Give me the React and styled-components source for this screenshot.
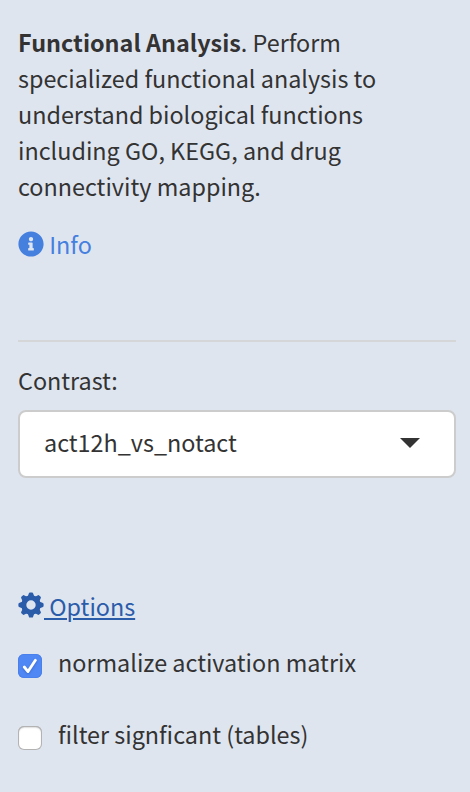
import React, { useState } from "react";
import styled, { createGlobalStyle } from "styled-components";
import { FaInfoCircle } from "react-icons/fa";

const GlobalStyle = createGlobalStyle`
  * { box-sizing: border-box; }
  body {
    margin: 0;
    background: #dfe5ef;
    color: #333;
    font-family: "Noto Sans CJK SC", "Noto Sans", sans-serif;
    font-size: 23.37px;
    line-height: 36px;
  }
`;

const Sidebar = styled.aside`
  display: flex;
  flex-direction: column;
  width: 470px;
  height: 792px;
  padding: 24px 14px 0 18px;
  overflow: hidden;
  background: #dfe5ef;
`;

const Description = styled.p`
  margin: 0;
  white-space: nowrap;
`;

const IconLink = styled.a`
  display: flex;
  align-items: center;
  align-self: flex-start;
  height: 36px;
  margin-top: ${(p) => p.$top}px;
  color: ${(p) => p.$color};
  text-decoration: none;
  svg {
    display: block;
    flex: none;
    width: 26px;
    height: 26px;
    margin-bottom: ${(p) => p.$lift || 0}px;
  }
`;

const LinkText = styled.span`
  white-space: pre;
  text-decoration: ${(p) => (p.$underlined ? "underline" : "none")};
  text-decoration-thickness: 2px;
  text-underline-offset: 2px;
`;

const Divider = styled.hr`
  width: 100%;
  height: 2px;
  margin: 78px 0 20px;
  border: 0;
  background: #d5d6d8;
`;

const Label = styled.label`
  height: 36px;
`;

const Select = styled.button`
  display: flex;
  align-items: center;
  justify-content: space-between;
  width: 438px;
  height: 68px;
  margin-top: 12px;
  padding: 0 34px 4px 24px;
  border: 2px solid #ccc;
  border-radius: 8px;
  background: #fff;
  color: inherit;
  font: inherit;
`;

const Caret = styled.span`
  border: 10px solid transparent;
  border-top-color: #333;
  border-bottom: 0;
  margin-top: 2px;
`;

const Option = styled.label`
  display: flex;
  align-items: center;
  gap: 16px;
  height: 36px;
  margin-top: ${(p) => p.$top}px;
`;

const Checkbox = styled.input`
  position: absolute;
  opacity: 0;
`;

const Box = styled.span`
  width: 24px;
  height: 24px;
  margin-top: 8px;
  border-radius: 6px;
  background: ${(p) => (p.$checked ? "#4f87f5" : "#fff")};
  box-shadow: ${(p) =>
    p.$checked
      ? "inset 0 0 0 1px #4a80eb"
      : "inset 0 0 0 1px #b3b3b3, inset 0 1px 2px #999"};
  svg {
    display: block;
    filter: drop-shadow(0 1px 1px rgba(20, 50, 130, 0.35));
  }
`;

const toothAngles = [0, 45, 90, 135, 180, 225, 270, 315];

function Gear() {
  return (
    <svg viewBox="0 0 26 26" fill="currentColor" aria-hidden="true">
      <circle cx="13" cy="13" r="7.2" fill="none" stroke="currentColor" strokeWidth="5" />
      {toothAngles.map((angle) => (
        <path
          key={angle}
          d="M8.8 5 Q10.4 3.8 10.800 1.600 Q11 .4 12 .4H14Q15 .4 15.200 1.600 Q15.600 3.800 17.200 5Z"
          transform={`rotate(${angle} 13 13)`}
        />
      ))}
    </svg>
  );
}

function CheckOption({ label, initial, top }) {
  const [checked, setChecked] = useState(initial);
  return (
    <Option $top={top}>
      <Checkbox type="checkbox" checked={checked} onChange={() => setChecked(!checked)} />
      <Box $checked={checked}>
        {checked && (
          <svg width="24" height="24" viewBox="0 0 24 24" fill="none" stroke="#fff" strokeWidth="2.8" strokeLinecap="round" strokeLinejoin="round">
            <path d="M6.3 13 10 17.600 17.400 6.300" />
          </svg>
        )}
      </Box>
      <span>{label}</span>
    </Option>
  );
}

export default function App() {
  return (
    <>
      <GlobalStyle />
      <Sidebar>
        <Description>
          <b>Functional Analysis</b>. Perform
          <br />
          specialized functional analysis to
          <br />
          understand biological functions
          <br />
          including GO, KEGG, and drug
          <br />
          connectivity mapping.
        </Description>
        <IconLink href="#info" $top={22} $color="#4580df">
          <FaInfoCircle />
          <LinkText> Info</LinkText>
        </IconLink>
        <Divider />
        <Label>Contrast:</Label>
        <Select type="button">
          <span>act12h_vs_notact</span>
          <Caret />
        </Select>
        <IconLink href="#options" $top={110} $color="#2b5caa" $lift={2}>
          <Gear />
          <LinkText $underlined> Options</LinkText>
        </IconLink>
        <CheckOption label="normalize activation matrix" initial={true} top={20} />
        <CheckOption label="filter signficant (tables)" initial={false} top={36} />
      </Sidebar>
    </>
  );
}
